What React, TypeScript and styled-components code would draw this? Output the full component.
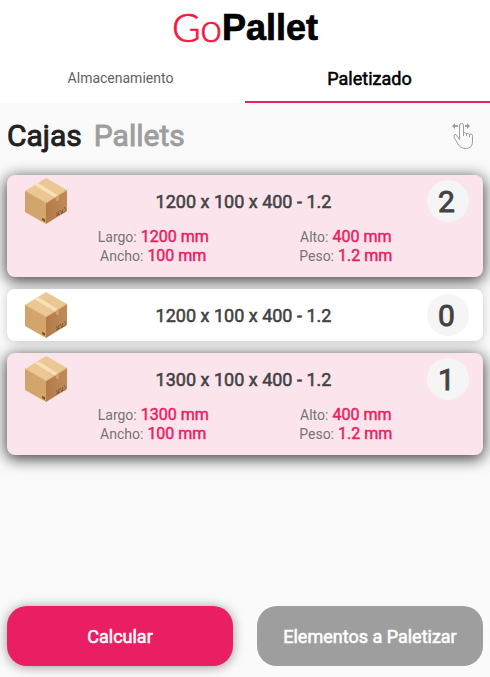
import React, { useState } from "react";
import styled, { createGlobalStyle, css } from "styled-components";

const GlobalStyle = createGlobalStyle`
  * { box-sizing: border-box; }
  body { margin: 0; background: #fafafa; font-family: Roboto, sans-serif; color: #212121; }
  button { font-family: inherit; border: 0; margin: 0; padding: 0; background: none; cursor: pointer; }
`;

const strong = css`
  font-weight: 400;
  -webkit-text-stroke: 0.03em currentColor;
`;

const Page = styled.div`
  min-height: 100vh;
  display: flex;
  flex-direction: column;
`;

const Header = styled.header`
  background: #fff;
`;

const Logo = styled.h1`
  margin: 0;
  height: 55px;
  display: flex;
  align-items: center;
  justify-content: center;
  font: 700 36px/55px "Liberation Sans", Arial, sans-serif;
  color: #000;
  -webkit-text-stroke: 0.02em currentColor;
`;

const LogoThin = styled.span`
  font-family: Lato, sans-serif;
  font-weight: 300;
  font-size: 39px;
  color: #f5163f;
`;

const Tabs = styled.nav`
  display: grid;
  grid-template-columns: 1fr 1fr;
`;

const Tab = styled.button<{ $active: boolean }>`
  height: 48px;
  font-size: 14px;
  color: #616161;
  padding-right: 4px;
  border-bottom: 2px solid #fff;
  ${(p) =>
    p.$active &&
    css`
      ${strong}
      font-size: 18px;
      color: #000;
      padding: 0 0 0 4px;
      border-color: #e91e63;
    `}
`;

const Toolbar = styled.div`
  display: flex;
  align-items: center;
  gap: 12px;
  height: 65px;
  padding: 0 15px 0 7px;
`;

const Heading = styled.button<{ $active: boolean }>`
  ${strong}
  font-size: 30px;
  color: ${(p) => (p.$active ? "#212121" : "#9e9e9e")};
`;

const SwipeButton = styled.button`
  display: flex;
  margin-left: auto;
`;

const List = styled.main`
  flex: 1;
  display: flex;
  flex-direction: column;
  gap: 12px;
  padding: 7px;
`;

const Card = styled.article<{ $selected: boolean }>`
  border-radius: 8px;
  background: ${(p) => (p.$selected ? "#fce4ec" : "#fff")};
  box-shadow: ${(p) => (p.$selected ? "0 3px 15px 1px rgba(0,0,0,.75)" : "0 1px 10px rgba(0,0,0,.2)")};
`;

const CardTop = styled.div`
  display: grid;
  grid-template-columns: 44px 1fr 42px;
  align-items: center;
  height: 52px;
  padding: 0 14px 0 17px;
`;

const CardTitle = styled.h2`
  ${strong}
  margin: 0;
  padding-right: 8px;
  text-align: center;
  font-size: 18px;
  color: #424242;
`;

const Count = styled.span`
  ${strong}
  display: flex;
  align-items: center;
  justify-content: center;
  height: 42px;
  padding-right: 3px;
  border-radius: 50%;
  background: #f5f5f5;
  font-size: 30px;
  color: #424242;
`;

const Details = styled.dl`
  display: grid;
  grid-template-columns: 1fr 1fr;
  grid-auto-rows: 19px;
  margin: 0;
  padding: 0 41px 12px 50px;
`;

const Detail = styled.div`
  display: flex;
  justify-content: center;
  align-items: baseline;
  gap: 4px;
  line-height: 19px;
`;

const Term = styled.dt`
  font-size: 14px;
  color: #757575;
`;

const Value = styled.dd`
  ${strong}
  margin: 0;
  font-size: 16px;
  color: #e91e63;
`;

const Footer = styled.footer`
  display: grid;
  grid-template-columns: 1fr 1fr;
  gap: 24px;
  padding: 0 7px 11px;
`;

const Action = styled.button<{ $primary?: boolean }>`
  ${strong}
  height: 60px;
  border-radius: 20px;
  font-size: 18px;
  color: #fff;
  background: ${(p) => (p.$primary ? "#e91e63" : "#9e9e9e")};
  box-shadow: ${(p) => (p.$primary ? "0 1px 12px rgba(0,0,0,.4)" : "none")};
`;

const BoxIcon = () => (
  <svg width="44" height="46" viewBox="0 0 44 46" aria-hidden="true">
    <defs>
      <linearGradient id="boxLeft" x1="0" y1="0" x2="1" y2="1">
        <stop offset="0" stopColor="#cfa36b" />
        <stop offset="1" stopColor="#d5a66c" />
      </linearGradient>
      <linearGradient id="boxRight" x1="0" y1="0" x2="1" y2="0">
        <stop offset="0" stopColor="#b07b49" />
        <stop offset="1" stopColor="#c18b58" />
      </linearGradient>
    </defs>
    <path d="M22 0 43 12 22 25 1 13Z" fill="#ebc793" />
    <path d="M1 13 22 25V46L1 34Z" fill="url(#boxLeft)" />
    <path d="M43 12 22 25V46L43 33Z" fill="url(#boxRight)" />
    <path d="M14 5 35 18 32 20 10 7Z" fill="#f8e2b5" />
    <path d="M32 19 35 17V22L34 23 32 23Z" fill="#cda06c" />
    <path d="M1 13 22 25 43 12" fill="none" stroke="#d9b079" strokeWidth="1" />
    <path d="m18 40 3 1v3l-3-2Z" fill="#75502f" />
    <path d="m32 34 2 3 1-4M36 32l2 3 1-4M40 29l2 3M32 38l4-2M37 36l5-3" fill="none" stroke="#79512f" strokeWidth="1" strokeOpacity=".8" />
  </svg>
);

const SwipeIcon = () => (
  <svg width="24" height="28" viewBox="0 0 24 28" fill="none" stroke="#9e9e9e" strokeWidth="1" aria-hidden="true">
    <path d="M8.500 17.500V3Q8.500 1.500 10.500 1.500T12.500 3V10.500Q14 9.500 15.500 12Q17 10 18.500 12.500Q21.500 11 21.500 14.500V20Q21 26.500 14.500 26.500Q9.500 26.500 7 22L3 15Q2.500 12 5 12.500L8.500 17.500M12.500 10V14M15.500 11.500V14M18.500 12V15" />
    <path d="M7 4H2M14 4H18" strokeWidth="2" />
    <path d="M4 1 1 4 4 7ZM16 1 19 4 16 7Z" fill="#9e9e9e" stroke="none" />
  </svg>
);

type Box = { id: number; length: number; width: number; height: number; weight: number; count: number };

const boxes: Box[] = [
  { id: 1, length: 1200, width: 100, height: 400, weight: 1.2, count: 2 },
  { id: 2, length: 1200, width: 100, height: 400, weight: 1.2, count: 0 },
  { id: 3, length: 1300, width: 100, height: 400, weight: 1.2, count: 1 },
];

const BoxCard = ({ box }: { box: Box }) => {
  const details: [string, number][] = [
    ["Largo:", box.length],
    ["Alto:", box.height],
    ["Ancho:", box.width],
    ["Peso:", box.weight],
  ];
  return (
    <Card $selected={box.count > 0}>
      <CardTop>
        <BoxIcon />
        <CardTitle>{`${box.length} x ${box.width} x ${box.height} - ${box.weight}`}</CardTitle>
        <Count>{box.count}</Count>
      </CardTop>
      {box.count > 0 && (
        <Details>
          {details.map(([label, value]) => (
            <Detail key={label}>
              <Term>{label}</Term>
              <Value>{value} mm</Value>
            </Detail>
          ))}
        </Details>
      )}
    </Card>
  );
};

export default function App() {
  const [tab, setTab] = useState("Paletizado");
  const [kind, setKind] = useState("Cajas");
  return (
    <Page>
      <GlobalStyle />
      <Header>
        <Logo>
          <LogoThin>Go</LogoThin>Pallet
        </Logo>
        <Tabs>
          {["Almacenamiento", "Paletizado"].map((name) => (
            <Tab key={name} $active={tab === name} onClick={() => setTab(name)}>
              {name}
            </Tab>
          ))}
        </Tabs>
      </Header>
      <Toolbar>
        {["Cajas", "Pallets"].map((name) => (
          <Heading key={name} $active={kind === name} onClick={() => setKind(name)}>
            {name}
          </Heading>
        ))}
        <SwipeButton aria-label="Deslizar">
          <SwipeIcon />
        </SwipeButton>
      </Toolbar>
      <List>
        {boxes.map((box) => (
          <BoxCard key={box.id} box={box} />
        ))}
      </List>
      <Footer>
        <Action $primary>Calcular</Action>
        <Action>Elementos a Paletizar</Action>
      </Footer>
    </Page>
  );
}
